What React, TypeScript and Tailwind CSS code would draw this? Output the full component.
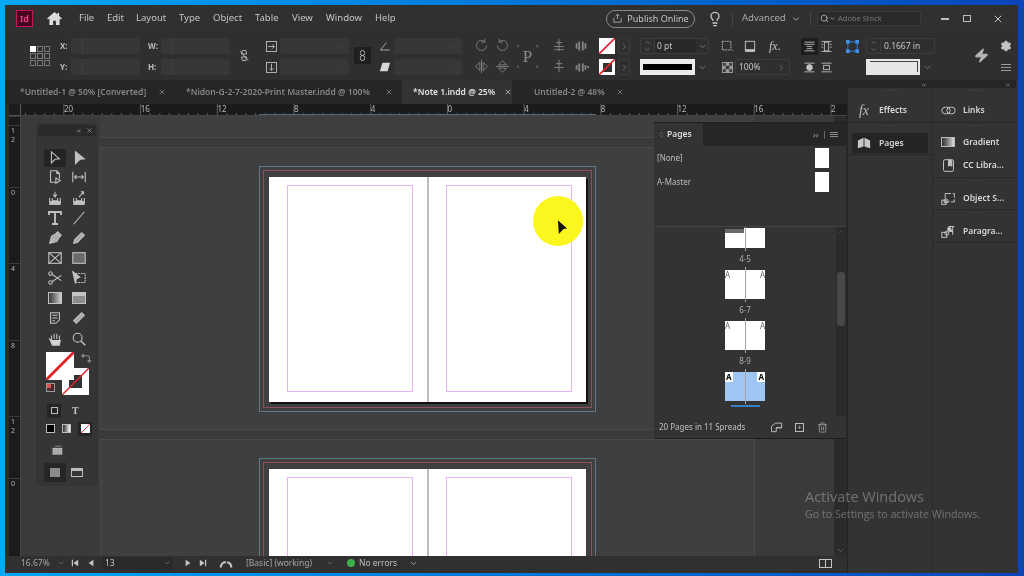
import type { ReactNode } from "react";
import { ChevronDown, ChevronRight, ChevronUp, ChevronsUpDown, Lightbulb, Search, Settings, Trash2, X, Zap } from "lucide-react";

const ic = "#c2c2c2";

function Ico({ children, size = 16, className = "" }: { children: ReactNode; size?: number; className?: string }) {
    return (
        <svg viewBox="0 0 18 18" width={size} height={size} fill="none" stroke={ic} strokeWidth="1.2" className={className}>
            {children}
        </svg>
    );
}

function Spin() {
    return (
        <div className="w-[14px] h-full flex flex-col items-center justify-center border-r border-[#3d3d3d] shrink-0">
            <ChevronUp size={9} color="#8a8a8a" />
            <ChevronDown size={9} color="#8a8a8a" />
        </div>
    );
}

function Field({ label, className = "" }: { label?: string; className?: string }) {
    return (
        <div className={`h-4 flex items-center ${className}`}>
            {label && <span className="w-[11px] text-[8px] font-bold text-[#bdbdbd] shrink-0">{label}</span>}
            <div className="flex-1 h-4 bg-[#373737] rounded-[2px] flex items-center">
                <div className="w-[12px] h-full border-r border-[#3f3f3f]" />
            </div>
        </div>
    );
}

function IconField({ icon }: { icon: ReactNode }) {
    return (
        <div className="h-4 flex items-center gap-[2px]">
            <div className="w-[14px] flex justify-center shrink-0">{icon}</div>
            <div className="flex-1 h-4 bg-[#373737] rounded-[2px] flex items-center justify-end pr-1">
                <ChevronDown size={8} color="#4a4a4a" />
            </div>
        </div>
    );
}

function Col({ className, children }: { className: string; children: ReactNode }) {
    return <div className={`flex flex-col gap-[5px] shrink-0 ${className}`}>{children}</div>;
}

function NoneSwatch({ className = "" }: { className?: string }) {
    return (
        <svg viewBox="0 0 16 16" className={`w-4 h-4 ${className}`}>
            <rect width="16" height="16" fill="#fff" />
            <path d="M0 16L16 0" stroke="#e0232d" strokeWidth="1.6" />
        </svg>
    );
}

function MenuBar() {
    const items = [
        ["File", "w-[28px]"],
        ["Edit", "w-[29px]"],
        ["Layout", "w-[43px]"],
        ["Type", "w-[34px]"],
        ["Object", "w-[42px]"],
        ["Table", "w-[37px]"],
        ["View", "w-[34px]"],
        ["Window", "w-[49px]"],
        ["Help", "w-[30px]"],
    ];
    return (
        <div className="h-[27px] bg-[#303030] flex items-center shrink-0 text-[#c4c4c4] text-[9.5px]">
            <div className="ml-[11px] w-[17px] h-[17px] bg-[#49031f] border border-[#c4165c] flex items-center justify-center text-[9px] text-[#ff3f8f] font-semibold leading-none">Id</div>
            <svg viewBox="0 0 16 14" width="15" height="13" className="ml-[14px]">
                <path d="M8 0L0 7l1 1.200 1.500-1.200V14h4V9.500h3V14h4V7l1.500 1.200L16 7l-3-2.600V1h-2v1.700z" fill="#dcdcdc" />
            </svg>
            <div className="ml-[17px] flex">
                {items.map(([t, w]) => (
                    <span key={t} className={w}>{t}</span>
                ))}
            </div>
            <div className="ml-[201px] w-[89px] h-[18px] rounded-full border border-[#8a8a8a] flex items-center justify-center gap-1 text-[9px]">
                <Ico size={11}><path d="M9 2v8M6 5l3-3 3 3M3 8v7h12V8" /></Ico>
                <span>Publish Online</span>
            </div>
            <Lightbulb size={16} color="#c4c4c4" className="ml-[12px]" />
            <div className="ml-[9px] w-px h-[14px] bg-[#444]" />
            <span className="ml-[9px] text-[9.5px] w-[43px] text-[#a8a8a8]">Advanced</span>
            <ChevronDown size={10} color="#c4c4c4" className="ml-[6px]" />
            <div className="ml-[9px] w-px h-[14px] bg-[#444]" />
            <div className="ml-[6px] w-[104px] h-[15px] bg-[#2a2a2a] border border-[#3a3a3a] rounded-[2px] flex items-center pl-[2px] text-[7.5px] text-[#777]">
                <Search size={9} color="#c4c4c4" />
                <ChevronDown size={7} color="#c4c4c4" />
                <span className="ml-[2px]">Adobe Stock</span>
            </div>
            <div className="ml-[20px] w-[8px] h-[2px] bg-[#bdbdbd]" />
            <div className="ml-[14px] w-[8px] h-[7px] border border-[#bdbdbd]" />
            <X size={12} color="#c4c4c4" className="ml-[21px]" />
        </div>
    );
}

function ControlBar() {
    return (
        <div className="h-[48px] bg-[#2f2f2f] flex items-start pt-[6px] shrink-0 text-[#c4c4c4]">
            <div className="ml-[25px] mt-[8px] w-[20px] grid grid-cols-3 gap-[1px] shrink-0">
                {[0, 1, 2, 3, 4, 5, 6, 7, 8].map((i) => (
                    <div key={i} className={`h-[6px] w-[6px] border border-[#777] ${i === 0 ? "bg-white border-white" : ""}`} />
                ))}
            </div>
            <Col className="ml-[10px] w-[80px]">
                <Field label="X:" />
                <Field label="Y:" />
            </Col>
            <Col className="ml-[8px] w-[82px]">
                <Field label="W:" className="[&>span]:w-[13px]" />
                <Field label="H:" className="[&>span]:w-[13px]" />
            </Col>
            <div className="ml-[8px] w-[12px] mt-[11px] shrink-0">
                <Ico size={13}><path d="M6 2h5l1 5H5zM5 11h7l-1 5H6zM3 3l11 13" /></Ico>
            </div>
            <Col className="ml-[14px] w-[85px]">
                <IconField icon={<Ico size={13}><rect x="2" y="2" width="14" height="14" /><path d="M4 9h9M10 6l3 3-3 3" /></Ico>} />
                <IconField icon={<Ico size={13}><rect x="2" y="2" width="14" height="14" /><path d="M9 4v9M6 10l3 3 3-3" /></Ico>} />
            </Col>
            <div className="ml-[5px] mt-[9px] w-[17px] h-[17px] bg-[#1f1f1f] flex items-center justify-center shrink-0">
                <Ico size={13}><rect x="6" y="2" width="6" height="7" rx="3" /><rect x="6" y="9" width="6" height="7" rx="3" /></Ico>
            </div>
            <Col className="ml-[7px] w-[84px]">
                <IconField icon={<Ico size={12}><path d="M2 15h14M2 15L11 4" /></Ico>} />
                <IconField icon={<svg viewBox="0 0 14 14" width="12" height="12"><path d="M4 2h9l-3 10H1z" fill="#d8d8d8" /></svg>} />
            </Col>
            <Col className="ml-[12px] w-[36px] opacity-50">
                <div className="h-4 flex justify-between">
                    <Ico size={15}><path d="M15 9a6 6 0 1 1-2-4.500M13 1v4h-4" /></Ico>
                    <Ico size={15}><path d="M3 9a6 6 0 1 0 2-4.500M5 1v4h4" /></Ico>
                </div>
                <div className="h-4 flex justify-between">
                    <Ico size={15}><path d="M9 1v16M7 4v10L2 9zM11 4v10l5-5z" /></Ico>
                    <Ico size={15}><path d="M1 9h16M4 7h10L9 2zM4 11h10l-5 5z" /></Ico>
                </div>
            </Col>
            <div className="ml-[7px] mt-[7px] w-[21px] h-[23px] relative flex items-center justify-center font-['Liberation_Serif',serif] text-[17px] text-[#8a8a8a] shrink-0">
                <svg viewBox="0 0 21 23" className="absolute inset-0" fill="none" stroke="#777"><path d="M0 3V1h2M19 1h2v2M0 20v2h2M19 22h2v-2" /></svg>
                P
            </div>
            <Col className="ml-[14px] w-[37px] opacity-60">
                <div className="h-4 flex justify-between">
                    <Ico size={14}><path d="M9 1v16M5 6h8M3 11h12M3 15h12" /></Ico>
                    <Ico size={16}><path d="M4 6v6M7 4v10M11 4v10M14 6v6" strokeWidth="2" /></Ico>
                </div>
                <div className="h-4 flex justify-between">
                    <Ico size={14}><path d="M9 1v16M5 6h8M3 11h12" /></Ico>
                    <Ico size={16}><path d="M4 7v5M7 5v9M11 5v9M14 7v5M16 9l2 0" strokeWidth="2" /></Ico>
                </div>
            </Col>
            <Col className="ml-[10px] w-[31px]">
                <div className="h-4 flex justify-between">
                    <NoneSwatch />
                    <div className="w-[12px] h-4 border border-[#3d3d3d] rounded-[2px] flex items-center justify-center"><ChevronRight size={9} color="#7a7a7a" /></div>
                </div>
                <div className="h-4 flex justify-between">
                    <div className="relative w-4 h-4 bg-white flex items-center justify-center">
                        <div className="w-[9px] h-[9px] bg-[#333]" />
                        <NoneSwatch className="absolute inset-0 [&>rect]:fill-transparent" />
                    </div>
                    <div className="w-[12px] h-4 border border-[#3d3d3d] rounded-[2px] flex items-center justify-center"><ChevronRight size={9} color="#7a7a7a" /></div>
                </div>
            </Col>
            <Col className="ml-[10px] w-[69px]">
                <div className="h-4 flex border border-[#3d3d3d] rounded-[2px] items-center text-[8.5px]">
                    <Spin />
                    <span className="w-[41px] bg-[#282828] h-full pl-[2px] leading-[14px]">0 pt</span>
                    <div className="flex-1 flex justify-center"><ChevronDown size={9} color="#8a8a8a" /></div>
                </div>
                <div className="h-4 flex items-center">
                    <div className="w-[55px] h-4 bg-[#ececec] flex items-center px-[3px]">
                        <div className="w-full h-[6px] bg-black" />
                    </div>
                    <div className="flex-1 flex justify-center"><ChevronDown size={9} color="#8a8a8a" /></div>
                </div>
            </Col>
            <Col className="ml-[11px] w-[70px]">
                <div className="h-4 flex items-center">
                    <Ico size={14}><rect x="3" y="3" width="11" height="11" strokeDasharray="2 1" /><path d="M16 15h1" /></Ico>
                    <Ico size={14} className="ml-[9px]"><rect x="3" y="3" width="12" height="11" /><path d="M3 14h12v2H3z" fill={ic} /></Ico>
                    <span className="ml-[12px] font-['Liberation_Serif',serif] italic text-[12px] leading-none">fx.</span>
                </div>
                <div className="h-4 flex items-center">
                    <svg viewBox="0 0 12 12" width="11" height="11" className="ml-[2px]"><rect width="12" height="12" fill="#9a9a9a" /><path d="M1 1h3v3H1zM8 1h3v3H8zM1 8h3v3H1zM8 8h3v3H8zM4 4h4v4H4z" fill="#3a3a3a" /></svg>
                    <div className="ml-[2px] flex-1 h-4 border border-[#3d3d3d] rounded-[2px] flex text-[8.5px] items-center pl-[3px]">
                        <span className="flex-1">100%</span>
                        <ChevronRight size={9} color="#7a7a7a" className="mr-[3px]" />
                    </div>
                </div>
            </Col>
            <Col className="ml-[11px] w-[32px]">
                <div className="h-4 flex items-center justify-between">
                    <div className="w-[17px] h-[17px] bg-[#1e1e1e] flex items-center justify-center"><Ico size={13}><path d="M2 3h14M2 6h14M5 9h8M5 12h8M2 15h14" /></Ico></div>
                    <Ico size={13}><rect x="6" y="3" width="6" height="12" /><path d="M2 2h14M2 16h14M2 6h2M2 10h2M14 6h2M14 10h2" /></Ico>
                </div>
                <div className="h-4 flex items-center justify-between">
                    <Ico size={13} className="ml-[2px]"><circle cx="9" cy="9" r="4" fill={ic} /><path d="M2 3h14M2 15h14" /></Ico>
                    <Ico size={13}><rect x="5" y="6" width="8" height="6" /><path d="M2 3h14M2 15h14" /></Ico>
                </div>
            </Col>
            <Col className="ml-[13px] w-[89px]">
                <div className="h-4 flex items-center">
                    <svg viewBox="0 0 14 14" width="13" height="13" className="shrink-0"><rect x="2" y="2" width="10" height="10" fill="none" stroke="#2f7fd8" /><g fill="#3b8eea"><rect width="4" height="4" /><rect x="10" width="4" height="4" /><rect y="10" width="4" height="4" /><rect x="10" y="10" width="4" height="4" /></g></svg>
                    <div className="ml-[7px] flex-1 h-4 flex border border-[#3d3d3d] rounded-[2px] items-center text-[8.5px]">
                        <Spin />
                        <span className="pl-[3px]">0.1667 in</span>
                    </div>
                </div>
                <div className="h-4 flex items-center pl-[20px]">
                    <div className="w-[54px] h-4 bg-[#e6e6e6] flex justify-end items-start pt-[2px] pr-[2px]">
                        <div className="w-[48px] h-[11px] border-t border-r border-[#444]" />
                    </div>
                    <div className="flex-1 flex justify-center"><ChevronDown size={9} color="#8a8a8a" /></div>
                </div>
            </Col>
            <div className="ml-[39px] mt-[10px] w-4 shrink-0">
                <Zap size={15} color="#b5b5b5" fill="#b5b5b5" className="-skew-x-6" />
            </div>
            <Col className="ml-[8px] w-4 items-center">
                <div className="h-4 flex items-center"><Settings size={12} color="#c4c4c4" fill="#c4c4c4" /></div>
                <div className="h-4 flex flex-col justify-center gap-[2px]">
                    <div className="w-[10px] h-px bg-[#9a9a9a]" />
                    <div className="w-[10px] h-px bg-[#9a9a9a]" />
                    <div className="w-[10px] h-px bg-[#9a9a9a]" />
                </div>
            </Col>
        </div>
    );
}

function TabBar() {
    return (
        <div className="h-[24px] bg-[#262626] flex items-center shrink-0 text-[8.5px] font-semibold text-[#868686] whitespace-nowrap">
            <span className="ml-[15px] w-[138px]">*Untitled-1 @ 50% [Converted]</span>
            <X size={8} color="#999" />
            <span className="ml-[20px] w-[199px]">*Nidon-G-2-7-2020-Print Master.indd @ 100%</span>
            <X size={8} color="#999" />
            <div className="ml-[9px] w-[110px] h-full bg-[#333] flex items-center pl-[11px] text-[#e2e2e2]">
                <span className="w-[93px]">*Note 1.indd @ 25%</span>
                <X size={8} color="#ddd" />
            </div>
            <span className="ml-[22px] w-[82px]">Untitled-2 @ 48%</span>
            <X size={8} color="#999" />
        </div>
    );
}

function HRuler() {
    const labels = ["20", "16", "12", "8", "4", "0", "4", "8", "12", "16", "2"];
    const ticks = Array.from({ length: 88 }, (_, i) => i);
    return (
        <div className="h-[12px] flex shrink-0">
            <div className="w-[4px] bg-[#2c2c2c]" />
            <div className="w-[12px] bg-[#1d1d1d] border-r border-b border-[#555]" />
            <div className="flex-1 bg-[#1b1b1b] relative overflow-hidden border-b border-[#444] text-[8px] text-[#b5b5b5]">
                <svg width="812" height="12" className="absolute left-0 top-0">
                    {ticks.map((i) => (
                        <path key={i} d={`M${(i * 9.59 + 4.5).toFixed(1)} ${i % 8 === 4 ? 0 : 9}V12`} stroke="#7a7a7a" strokeWidth="0.7" />
                    ))}
                </svg>
                <div className="absolute left-[38px] top-0 flex leading-[10px]">
                    {labels.map((l, i) => (
                        <span key={i} className="w-[76.7px] pl-[5px]">{l}</span>
                    ))}
                </div>
                <div className="absolute left-[238px] bottom-0 w-[337px] h-px bg-[#4d6a80]" />
            </div>
        </div>
    );
}

function VRuler() {
    const rows = [
        ["h-[9px]", ""],
        ["h-[62px]", "1|2"],
        ["h-[76px]", "0"],
        ["h-[77px]", "4"],
        ["h-[76px]", "8"],
        ["h-[62px]", "1|2"],
        ["h-[60px]", "0"],
    ];
    return (
        <div className="flex shrink-0">
            <div className="w-[4px] bg-[#2c2c2c]" />
            <div className="w-[12px] bg-[#1b1b1b] border-r border-[#444] text-[7px] text-[#b5b5b5] leading-[9px] overflow-hidden flex flex-col">
                {rows.map(([h, l], i) => (
                    <div key={i} className={`${h} pl-[2px] flex flex-col shrink-0 border-t border-[#3a3a3a]`}>
                        {l.split("|").map((p) => (
                            <span key={p}>{p}</span>
                        ))}
                    </div>
                ))}
            </div>
        </div>
    );
}

function Spread({ cut = false }: { cut?: boolean }) {
    return (
        <div className={`ml-[158px] mt-[18px] w-[337px] border border-[#60798a] p-[3px] ${cut ? "border-b-0 pb-0 flex-1 flex flex-col" : "h-[246px]"}`}>
            <div className={`border border-[#8e4f5a] px-[5px] pt-[6px] h-full ${cut ? "border-b-0 flex-1" : "pb-[5px]"}`}>
                <div className={`h-full bg-white flex relative ${cut ? "" : "shadow-[2px_2px_0_#111]"}`}>
                    <div className={`w-[158px] pl-[18px] pt-[8px] ${cut ? "" : "pb-[10px]"}`}>
                        <div className={`w-[126px] h-full border border-[#e6b4f6] ${cut ? "border-b-0" : ""}`} />
                    </div>
                    <div className="w-[2px] bg-[#bdbdbd]" />
                    <div className={`pl-[17px] pt-[8px] ${cut ? "" : "pb-[10px]"}`}>
                        <div className={`w-[126px] h-full border border-[#e6b4f6] ${cut ? "border-b-0" : ""}`} />
                    </div>
                </div>
            </div>
        </div>
    );
}

function Workspace() {
    return (
        <div className="flex-1 flex min-h-0">
            <VRuler />
            <div className="flex-1 bg-[#3b3a3b] pl-[79px] flex flex-col overflow-hidden">
                <div className="w-[655px] h-[22px] bg-[#403f40] border-b border-[#4a4a4a] shrink-0" />
                <div className="mt-[9px] w-[655px] h-[283px] bg-[#403f40] border border-[#4a4a4a] shrink-0">
                    <Spread />
                </div>
                <div className="mt-[9px] w-[655px] flex-1 bg-[#403f40] border border-[#4a4a4a] border-b-0 flex flex-col min-h-0">
                    <Spread cut />
                </div>
            </div>
            <div className="w-[13px] bg-[#2b2b2b] flex items-end justify-center pb-[1px]">
                <ChevronDown size={9} color="#666" />
            </div>
        </div>
    );
}

function StatusBar() {
    return (
        <div className="h-[17px] pb-[3px] bg-[#303030] flex items-center shrink-0 text-[8.5px] text-[#a5a5a5] whitespace-nowrap">
            <span className="ml-[16px] w-[36px]">16.67%</span>
            <ChevronDown size={8} color="#777" />
            <svg viewBox="0 0 10 10" width="8" height="8" className="ml-[6px]"><path d="M1 1h1.500v8H1zM9 1v8L3 5z" fill="#c4c4c4" /></svg>
            <svg viewBox="0 0 10 10" width="8" height="8" className="ml-[8px]"><path d="M8 1v8L2 5z" fill="#c4c4c4" /></svg>
            <div className="ml-[7px] w-[71px] h-[13px] bg-[#2a2a2a] flex items-center justify-between pl-[3px] pr-[2px] text-[#c4c4c4]">
                <span>13</span>
                <ChevronDown size={8} color="#777" />
            </div>
            <svg viewBox="0 0 10 10" width="8" height="8" className="ml-[11px]"><path d="M2 1v8l6-4z" fill="#c4c4c4" /></svg>
            <svg viewBox="0 0 10 10" width="8" height="8" className="ml-[7px]"><path d="M9 1H7.500v8H9zM1 1v8l6-4z" fill="#c4c4c4" /></svg>
            <svg viewBox="0 0 16 16" width="14" height="14" className="ml-[12px]"><path d="M2 13a6 6 0 0 1 12 0" fill="none" stroke="#c4c4c4" strokeWidth="2.500" strokeDasharray="9 1.500" /></svg>
            <span className="ml-[13px] w-[80px]">[Basic] (working)</span>
            <ChevronDown size={8} color="#777" />
            <div className="ml-[13px] w-[8px] h-[8px] rounded-full bg-[#3fae49]" />
            <span className="ml-[4px] w-[50px] text-[#c0c0c0]">No errors</span>
            <ChevronDown size={9} color="#bbb" />
            <div className="ml-[401px] w-[13px] h-[9px] border border-[#c4c4c4] flex justify-center">
                <div className="w-px h-full bg-[#c4c4c4]" />
            </div>
        </div>
    );
}

const toolRows: { h: string; a: ReactNode; b: ReactNode; active?: boolean }[] = [
    {
        h: "h-[18px]",
        active: true,
        a: <Ico><path d="M5 2l9 8-5 .5-4 4z" /></Ico>,
        b: <Ico><path d="M5 2l10 8-5 .5-5 5z" fill={ic} /></Ico>,
    },
    {
        h: "h-[20px]",
        a: <Ico><path d="M4 2h7l3 3v6M4 2v13h6M11 2v3h3M10 10l5 3-5 3z" /></Ico>,
        b: <Ico><path d="M2 3v12M16 3v12M4 9h10M4 9l2-2M4 9l2 2M14 9l-2-2M14 9l-2 2" /></Ico>,
    },
    {
        h: "h-[21px]",
        a: <Ico><path d="M3 9v7h12V9M6 9v3h6V9M9 2v6M7 5l2 3 2-3" /><path d="M4 13h10v3H4z" fill={ic} /></Ico>,
        b: <Ico><path d="M3 9v7h12V9M6 9v3h6V9M9 8l5-6M11 2h3v3" /><path d="M4 13h10v3H4z" fill={ic} /></Ico>,
    },
    {
        h: "h-[20px]",
        a: <Ico size={18}><path d="M3 6V3h12v3M9 3v12M6 15h6" strokeWidth="1.800" /></Ico>,
        b: <Ico><path d="M3 16L15 2" /></Ico>,
    },
    {
        h: "h-[20px]",
        a: <Ico><path d="M3 15l2-8 5-3 4 4-3 5zM3 15l5-5M10 4l2-2 4 4-2 2" fill="#aaa" /></Ico>,
        b: <Ico><path d="M3 15l1-4 8-8 3 3-8 8z" fill="#aaa" /></Ico>,
    },
    {
        h: "h-[20px]",
        a: <Ico><rect x="2" y="3" width="14" height="12" /><path d="M2 3l14 12M16 3L2 15" /></Ico>,
        b: <Ico><rect x="2" y="3" width="14" height="12" fill="#6a6a6a" /></Ico>,
    },
    {
        h: "h-[20px]",
        a: <Ico><circle cx="4" cy="4" r="2" /><circle cx="4" cy="14" r="2" /><path d="M6 5l10 7M6 13L16 6" /></Ico>,
        b: <Ico><rect x="5" y="4" width="11" height="10" strokeDasharray="2 1" /><path d="M2 2l8 6-4 2-1 5z" fill={ic} /></Ico>,
    },
    {
        h: "h-[20px]",
        a: (
            <div className="w-[14px] h-[12px] bg-linear-to-r from-[#3a3a3a] to-[#cfcfcf] border border-[#c2c2c2]" />
        ),
        b: (
            <div className="w-[14px] h-[12px] bg-[#8c8c8c] border border-[#c2c2c2] border-t-[4px]" />
        ),
    },
    {
        h: "h-[20px]",
        a: <Ico><path d="M4 3h10v8l-4 4H4zM6 6h6M6 9h6M6 12h3" /></Ico>,
        b: <Ico><path d="M3 12l9-9 3 3-9 9zM6 9l1 1M8 7l1 1M10 5l1 1" fill="#aaa" /></Ico>,
    },
    {
        h: "h-[21px]",
        a: <Ico><path d="M5 10V5M8 9V3M11 9V3M14 10V5M5 10L3 9l3 7h8l1-6" fill="#d5d5d5" /></Ico>,
        b: <Ico><circle cx="7.500" cy="7.500" r="5" /><path d="M11 11l5 5" strokeWidth="1.600" /></Ico>,
    },
];

function Toolbox() {
    return (
        <div className="absolute left-[33px] top-[45px] w-[58px] h-[359px] bg-[#353535] flex flex-col shadow-[0_0_2px_#222]">
            <div className="h-[11px] bg-[#2a2a2a] flex items-center justify-end gap-[5px] pr-[3px] text-[7px] text-[#999] rounded-t-sm">
                <span className="leading-none">‹‹</span>
                <X size={7} color="#aaa" />
            </div>
            <div className="h-[13px]" />
            {toolRows.map((r, i) => (
                <div key={i} className={`${r.h} flex pl-[6px] items-center`}>
                    <div className={`w-[22px] h-full flex items-center justify-center ${r.active ? "bg-[#242424]" : ""}`}>{r.a}</div>
                    <div className="w-[2px]" />
                    <div className="w-[22px] flex items-center justify-center">{r.b}</div>
                </div>
            ))}
            <div className="mt-[3px] ml-[8px] h-[43px] relative">
                <NoneSwatch className="absolute left-0 top-0 w-[28px]! h-[28px]! z-10 border-0" />
                <div className="absolute left-[16px] top-[16px] w-[27px] h-[27px] bg-white flex items-center justify-center">
                    <div className="w-[13px] h-[13px] bg-[#333]" />
                    <svg viewBox="0 0 27 27" className="absolute inset-0"><path d="M0 27L27 0" stroke="#e0232d" strokeWidth="1.500" /></svg>
                </div>
                <Ico size={10} className="absolute left-[35px] top-[1px]"><path d="M3 5h9a3 3 0 0 1 3 3v6M1 5l3-3v6zM15 17l-3-3h6z" /></Ico>
                <div className="absolute left-0 top-[31px] w-[9px] h-[9px] border border-[#999] bg-[#4a2a2a]">
                    <div className="w-[4px] h-[4px] bg-[#e05050]" />
                </div>
            </div>
            <div className="mt-[7px] flex items-center pl-[9px] h-[17px]">
                <div className="w-[14px] h-[14px] bg-[#252525] flex items-center justify-center">
                    <div className="w-[7px] h-[7px] border border-[#bbb]" />
                </div>
                <span className="ml-[11px] text-[10px] font-bold text-[#c4c4c4] font-['Liberation_Serif',serif] leading-none">T</span>
            </div>
            <div className="mt-[2px] flex items-center pl-[8px] gap-[7px] h-[15px]">
                <div className="w-[9px] h-[9px] bg-black border border-[#bbb]" />
                <div className="w-[9px] h-[9px] bg-linear-to-r from-[#333] to-white border border-[#bbb]" />
                <div className="w-[14px] h-[14px] bg-[#252525] flex items-center justify-center"><NoneSwatch className="w-[9px]! h-[9px]!" /></div>
            </div>
            <div className="mt-[7px] pl-[13px] h-[15px] flex items-center">
                <Ico size={13}><rect x="3" y="6" width="12" height="8" fill="#aaa" /><path d="M1 6h1M1 10h1M1 14h1M6 3h8" strokeDasharray="2 1" /></Ico>
            </div>
            <div className="mt-[5px] flex pl-[6px] h-[19px] items-center">
                <div className="w-[22px] h-full bg-[#262626] flex items-center justify-center">
                    <div className="w-[10px] h-[9px] bg-[#8a8a8a]" />
                </div>
                <div className="ml-[5px] w-[12px] h-[9px] border border-[#bbb] border-t-[3px]" />
            </div>
        </div>
    );
}

function Thumb({ className, blue = false, num }: { className: string; blue?: boolean; num?: string }) {
    const a = blue ? "bg-white text-black font-bold px-[1px]" : "text-[#666]";
    return (
        <>
            <div className={`relative w-[40px] shrink-0 ${blue ? "bg-[#9fc6f2]" : "bg-white"} ${className}`}>
                <div className="absolute left-[20px] -top-[3px] -bottom-[3px] w-px bg-[#a5a5a5]" />
                {num === "4-5" ? (
                    <div className="absolute left-0 top-0 w-[19px] h-[5px] bg-[#6a6a6a] border-t border-[#333]" />
                ) : (
                    <>
                        <span className={`absolute left-0 top-0 text-[8px] leading-[10px] ${a}`}>A</span>
                        <span className={`absolute right-0 top-0 text-[8px] leading-[10px] ${a}`}>A</span>
                    </>
                )}
            </div>
            {num && <div className="h-[22px] flex items-center text-[8px] text-[#b0b0b0] shrink-0">{num}</div>}
        </>
    );
}

function PagesPanel() {
    return (
        <div className="absolute left-[649px] top-[42px] w-[192px] h-[316px] bg-[#333] flex flex-col border-t border-[#1f1f1f] text-[#bdbdbd] shadow-[0_1px_0_#1d1d1d]">
            <div className="h-[23px] bg-[#262626] flex items-center shrink-0">
                <div className="w-[49px] h-full bg-[#333] flex items-center pl-[4px] gap-[2px] text-[8.5px] font-semibold text-[#dcdcdc]">
                    <ChevronsUpDown size={7} color="#888" />
                    Pages
                </div>
                <span className="ml-[110px] text-[9px] text-[#aaa] leading-none">››</span>
                <div className="ml-[5px] w-px h-[8px] bg-[#666]" />
                <div className="ml-[5px] flex flex-col gap-[1px]">
                    <div className="w-[8px] h-px bg-[#888]" />
                    <div className="w-[8px] h-px bg-[#888]" />
                    <div className="w-[8px] h-px bg-[#888]" />
                </div>
            </div>
            <div className="h-[81px] border-b border-[#444] shrink-0 pl-[3px] pr-[17px] pt-[2px] text-[8px]">
                <div className="h-[20px] flex items-center justify-between">
                    <span>[None]</span>
                    <div className="w-[14px] h-[20px] bg-white" />
                </div>
                <div className="mt-[4px] h-[20px] flex items-center justify-between">
                    <span>A-Master</span>
                    <div className="w-[14px] h-[20px] bg-white" />
                </div>
            </div>
            <div className="flex-1 flex min-h-0">
                <div className="w-[182px] pt-[1px] pl-[71px] flex flex-col overflow-hidden">
                    <div className="w-[40px] flex flex-col items-center">
                        <Thumb className="h-[20px]" num="4-5" />
                        <Thumb className="h-[29px]" num="6-7" />
                        <Thumb className="h-[29px]" num="8-9" />
                        <Thumb className="h-[29px]" blue />
                        <div className="mt-[4px] w-[29px] h-[2px] bg-[#3b7fc4]" />
                    </div>
                </div>
                <div className="w-[10px] bg-[#2b2b2b] flex flex-col items-center pt-[1px]">
                    <ChevronUp size={8} color="#555" />
                    <div className="mt-[36px] w-[8px] h-[54px] bg-[#484848] rounded-[3px]" />
                </div>
            </div>
            <div className="h-[22px] flex items-center shrink-0 text-[8px] pl-[5px] text-[#c0c0c0]">
                <span className="w-[111px]">20 Pages in 11 Spreads</span>
                <Ico size={14}><path d="M2 8l5-4 8 0v6H8v5H2zM8 10h7" /></Ico>
                <div className="ml-[11px] w-[9px] h-[9px] border border-[#bbb] flex items-center justify-center text-[7px] leading-none">+</div>
                <Trash2 size={11} color="#999" className="ml-[13px]" />
            </div>
        </div>
    );
}

function Grip() {
    return <div className="mx-auto w-[14px] h-px bg-[#3e3e3e]" />;
}

function PanelItem({ icon, label, active = false }: { icon: ReactNode; label: string; active?: boolean }) {
    return (
        <div className={`h-[20px] flex items-center text-[8.5px] font-semibold text-[#d8d8d8] whitespace-nowrap ${active ? "bg-[#242424]" : ""}`}>
            <div className="w-[24px] flex justify-center shrink-0">{icon}</div>
            <span className="ml-[3px]">{label}</span>
        </div>
    );
}

function Section({ className, children }: { className: string; children: ReactNode }) {
    return <div className={`border-b border-[#272727] shrink-0 ${className}`}><Grip />{children}</div>;
}

function RightPanels() {
    return (
        <div className="w-[171px] flex shrink-0 bg-[#333] border-l border-[#242424]">
            <div className="w-[85px] border-r border-[#292929] flex flex-col">
                <div className="h-[8px] bg-[#262626] flex items-center justify-end pr-[6px] text-[7px] text-[#888] leading-none">‹‹</div>
                <Section className="h-[35px] pt-[2px] px-[4px]">
                    <div className="mt-[9px]">
                        <PanelItem label="Effects" icon={<span className="font-['Liberation_Serif',serif] italic text-[14px] font-normal text-[#bbb]">fx</span>} />
                    </div>
                </Section>
                <Section className="h-[32px] pt-[2px] px-[4px]">
                    <div className="mt-[7px]">
                        <PanelItem active label="Pages" icon={<svg viewBox="0 0 16 16" width="14" height="14"><path d="M7.500 2L1 5v9l6.500-2zM8.500 2L15 5v9l-6.500-2z" fill="#c8c8c8" /></svg>} />
                    </div>
                </Section>
            </div>
            <div className="flex-1 flex flex-col pr-[2px]">
                <div className="h-[8px] bg-[#262626] flex items-center justify-end pr-[6px] text-[7px] text-[#888] leading-none">‹‹</div>
                <Section className="h-[35px] pt-[2px] px-[3px]">
                    <div className="mt-[9px]">
                        <PanelItem label="Links" icon={<Ico size={15}><rect x="1" y="5" width="10" height="8" rx="4" /><rect x="7" y="5" width="10" height="8" rx="4" /></Ico>} />
                    </div>
                </Section>
                <Section className="h-[55px] pt-[2px] px-[3px]">
                    <div className="mt-[6px]">
                        <PanelItem label="Gradient" icon={<div className="w-[14px] h-[10px] border border-[#bbb] bg-linear-to-r from-[#333] to-[#ddd]" />} />
                    </div>
                    <div className="mt-[3px]">
                        <PanelItem label="CC Libra..." icon={<Ico size={15}><rect x="3" y="2" width="12" height="14" rx="2" /><path d="M9 3h4v7l-2-1.500L9 10z" fill={ic} /></Ico>} />
                    </div>
                </Section>
                <Section className="h-[32px] pt-[2px] px-[3px]">
                    <div className="mt-[7px]">
                        <PanelItem label="Object S..." icon={<Ico size={15}><rect x="5" y="3" width="11" height="10" strokeDasharray="7 2" /><rect x="1" y="11" width="5" height="5" /><circle cx="6" cy="12" r="2.500" /></Ico>} />
                    </div>
                </Section>
                <Section className="h-[33px] pt-[2px] px-[3px]">
                    <div className="mt-[8px]">
                        <PanelItem label="Paragra..." icon={<Ico size={15}><path d="M10 3h6M14 3v10M11 3a3 3 0 0 0 0 6h3" fill={ic} /><rect x="1" y="10" width="6" height="6" /><circle cx="7" cy="11" r="2.500" /></Ico>} />
                    </div>
                </Section>
            </div>
        </div>
    );
}

export default function App() {
    return (
        <div className="relative w-[1024px] h-[576px] overflow-hidden bg-linear-to-r from-[#08a8f5] to-[#0b44bb] pt-[5px] pb-[3px] pl-[5px] pr-[6px] flex flex-col font-['Noto_Sans',sans-serif] blur-[0.35px]">
            <MenuBar />
            <ControlBar />
            <div className="flex-1 flex min-h-0 relative">
                <div className="w-[842px] flex flex-col shrink-0 relative">
                    <TabBar />
                    <HRuler />
                    <Workspace />
                    <StatusBar />
                </div>
                <RightPanels />
                <Toolbox />
                <PagesPanel />
            </div>
            {/* Highlight that follows the recording's cursor */}
            <div className="absolute left-[533px] top-[196px] w-[50px] h-[50px] rounded-full bg-[#faf61e] flex items-center justify-center">
                <svg viewBox="0 0 12 16" width="11" height="15" className="ml-[9px] mt-[12px]"><path d="M1 0l10 9-4 .5L2 15z" fill="#111" /></svg>
            </div>
            <div className="absolute left-[805px] top-[488px] text-white/30 font-['Open_Sans',sans-serif] whitespace-nowrap">
                <div className="text-[14.5px] leading-[18px]">Activate Windows</div>
                <div className="text-[10.7px] leading-[16px]">Go to Settings to activate Windows.</div>
            </div>
        </div>
    );
}
